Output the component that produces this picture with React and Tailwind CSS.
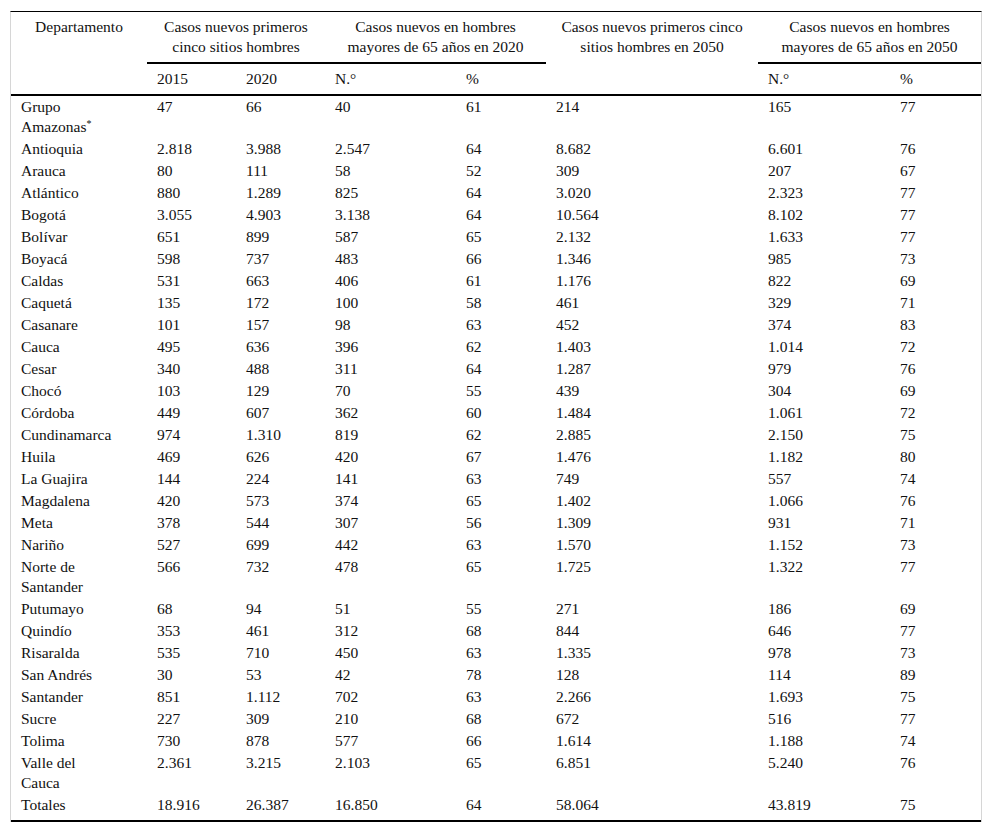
import React from "react";

const rows = [
  [["Grupo", "Amazonas", true], "47", "66", "40", "61", "214", "165", "77"],
  ["Antioquia", "2.818", "3.988", "2.547", "64", "8.682", "6.601", "76"],
  ["Arauca", "80", "111", "58", "52", "309", "207", "67"],
  ["Atlántico", "880", "1.289", "825", "64", "3.020", "2.323", "77"],
  ["Bogotá", "3.055", "4.903", "3.138", "64", "10.564", "8.102", "77"],
  ["Bolívar", "651", "899", "587", "65", "2.132", "1.633", "77"],
  ["Boyacá", "598", "737", "483", "66", "1.346", "985", "73"],
  ["Caldas", "531", "663", "406", "61", "1.176", "822", "69"],
  ["Caquetá", "135", "172", "100", "58", "461", "329", "71"],
  ["Casanare", "101", "157", "98", "63", "452", "374", "83"],
  ["Cauca", "495", "636", "396", "62", "1.403", "1.014", "72"],
  ["Cesar", "340", "488", "311", "64", "1.287", "979", "76"],
  ["Chocó", "103", "129", "70", "55", "439", "304", "69"],
  ["Córdoba", "449", "607", "362", "60", "1.484", "1.061", "72"],
  ["Cundinamarca", "974", "1.310", "819", "62", "2.885", "2.150", "75"],
  ["Huila", "469", "626", "420", "67", "1.476", "1.182", "80"],
  ["La Guajira", "144", "224", "141", "63", "749", "557", "74"],
  ["Magdalena", "420", "573", "374", "65", "1.402", "1.066", "76"],
  ["Meta", "378", "544", "307", "56", "1.309", "931", "71"],
  ["Nariño", "527", "699", "442", "63", "1.570", "1.152", "73"],
  [["Norte de", "Santander"], "566", "732", "478", "65", "1.725", "1.322", "77"],
  ["Putumayo", "68", "94", "51", "55", "271", "186", "69"],
  ["Quindío", "353", "461", "312", "68", "844", "646", "77"],
  ["Risaralda", "535", "710", "450", "63", "1.335", "978", "73"],
  ["San Andrés", "30", "53", "42", "78", "128", "114", "89"],
  ["Santander", "851", "1.112", "702", "63", "2.266", "1.693", "75"],
  ["Sucre", "227", "309", "210", "68", "672", "516", "77"],
  ["Tolima", "730", "878", "577", "66", "1.614", "1.188", "74"],
  [["Valle del", "Cauca"], "2.361", "3.215", "2.103", "65", "6.851", "5.240", "76"],
  ["Totales", "18.916", "26.387", "16.850", "64", "58.064", "43.819", "75"],
];

const widths = [136, 89, 89, 131, 90, 212, 132, 91];

export default function App() {
  return (
    <div className="bg-white min-h-[833px] pt-[11px] pl-[10px] font-['Liberation_Serif','Times_New_Roman',serif]">
      <table className="table-fixed border-separate border-spacing-0 w-[972px] border-t border-t-black border-l border-r border-l-[#d6d6d6] border-r-[#d6d6d6] font-['Liberation_Serif','Times_New_Roman',serif] text-[15.5px] leading-[20px] text-[#111]">
        <colgroup>
          {widths.map((w, i) => (
            <col key={i} style={{ width: w }} />
          ))}
        </colgroup>
        <thead>
          <tr>
            <th rowSpan={2} className="font-normal align-top text-center pt-[5px] px-[10px] border-b-2 border-black">
              Departamento
            </th>
            <th colSpan={2} className="font-normal align-top text-center py-[5px] px-[8px] border-b-2 border-black">
              Casos nuevos primeros cinco sitios hombres
            </th>
            <th colSpan={2} className="font-normal align-top text-center py-[5px] px-[8px] border-b-2 border-black">
              Casos nuevos en hombres mayores de 65 años en 2020
            </th>
            <th rowSpan={2} className="font-normal align-top text-center pt-[5px] px-[8px] border-b-2 border-black">
              Casos nuevos primeros cinco sitios hombres en 2050
            </th>
            <th colSpan={2} className="font-normal align-top text-center py-[5px] px-[8px] border-b-2 border-black">
              Casos nuevos en hombres mayores de 65 años en 2050
            </th>
          </tr>
          <tr>
            {["2015", "2020", "N.°", "%"].map((t, i) => (
              <th key={i} className="font-normal text-left py-[5px] pl-[10px] border-b-2 border-black">
                {t}
              </th>
            ))}
            {["N.°", "%"].map((t, i) => (
              <th key={"b" + i} className="font-normal text-left py-[5px] pl-[10px] border-b-2 border-black">
                {t}
              </th>
            ))}
          </tr>
        </thead>
        <tbody>
          {rows.map((r, ri) => {
            const last = ri === rows.length - 1;
            return (
              <tr key={ri}>
                {r.map((c, ci) => (
                  <td
                    key={ci}
                    className={
                      "align-top text-left pl-[10px] pr-[4px] pt-px " +
                      (last ? "pb-[5px] border-b-2 border-black" : "pb-px")
                    }
                  >
                    {Array.isArray(c) ? (
                      <>
                        {c[0]}
                        <br />
                        {c[1]}
                        {c[2] ? <sup className="text-[10px] leading-none">*</sup> : null}
                      </>
                    ) : (
                      c
                    )}
                  </td>
                ))}
              </tr>
            );
          })}
        </tbody>
      </table>
    </div>
  );
}
